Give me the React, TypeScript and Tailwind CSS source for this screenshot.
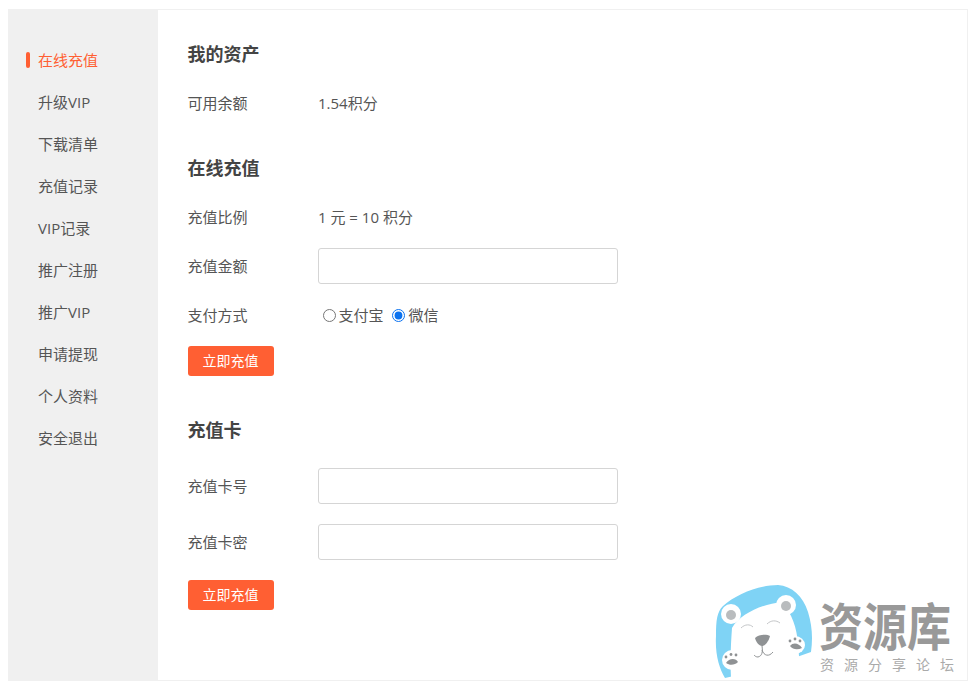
const navItems = ["在线充值", "升级VIP", "下载清单", "充值记录", "VIP记录", "推广注册", "推广VIP", "申请提现", "个人资料", "安全退出"]

const fontStack = "font-['Open_Sans','Noto_Sans_CJK_SC',sans-serif]"

const Row = ({ label, className = "", children }: { label: string; className?: string; children: React.ReactNode }) => (
  <div className={`flex items-center h-9 text-[15px] text-[#555] ${className}`}>
    <span className="w-[130px] shrink-0">{label}</span>
    {children}
  </div>
)

const Input = () => <input className="w-[300px] h-9 border border-[#d5d5d5] rounded-[3px] bg-white outline-none" />

const Heading = ({ className = "", children }: { className?: string; children: React.ReactNode }) => (
  <h2 className={`h-7 leading-7 text-lg font-bold text-[#444] ${className}`}>{children}</h2>
)

const SubmitButton = ({ className = "" }: { className?: string }) => (
  <button className={`block w-[86px] h-[30px] rounded-[3px] bg-[#ff5f33] text-sm text-white ${className}`}>立即充值</button>
)

const Radio = ({ label, checked, className = "" }: { label: string; checked?: boolean; className?: string }) => (
  <label className="flex items-center">
    <input type="radio" name="pay" defaultChecked={checked} className={`w-[13px] h-[13px] ml-[5px] accent-[#0b72ef] ${className}`} />
    {label}
  </label>
)

const Watermark = () => (
  <div className="absolute left-[700px] top-[570px] w-[278px] h-[121px] pointer-events-none">
    <svg width="130" height="121" viewBox="0 0 130 121" className="absolute left-0 top-0">
      <path d="M25 108C19 98 15 84 16 66C16 50 17 42 23 36C36 24 60 15 78 15C92 16 103 26 108 42C112 55 113 68 111 82L60 100Z" fill="#7fd3f5" />
      <path d="M31 108C30 90 31 72 32 58C40 44 62 34 82 32C92 44 97 58 98 74L100 98C88 108 50 112 31 108Z" fill="#fff" />
      <circle cx="31" cy="44" r="10" fill="#fff" />
      <circle cx="31" cy="45" r="5" fill="#b9bcbe" />
      <circle cx="86" cy="35" r="10" fill="#fff" />
      <circle cx="86" cy="36" r="5" fill="#b9bcbe" />
      <path d="M41 58C45 54 50 54 53 57" fill="none" stroke="#c4c6c8" strokeWidth="1" />
      <path d="M67 54C71 50 76 50 80 53" fill="none" stroke="#c4c6c8" strokeWidth="1" />
      <path d="M55 68C59 64 67 64 70 66C69 71 65 76 62 76C59 76 56 72 55 68Z" fill="#8f9294" />
      <path d="M62 76C63 82 62 86 58 87C56 87 55 86 54 85M62 80C64 86 69 87 73 82" fill="none" stroke="#8f9294" strokeWidth="1" />
      <ellipse cx="32" cy="90" rx="10" ry="10" fill="#fff" />
      <ellipse cx="95" cy="75" rx="10" ry="9" fill="#fff" />
      <path d="M26 93C29 88 36 88 38 92C35 95 30 96 26 93Z" fill="#8f9294" />
      <circle cx="26" cy="87" r="1.4" fill="#8f9294" />
      <circle cx="31" cy="84.5" r="1.4" fill="#8f9294" />
      <circle cx="36" cy="85" r="1.4" fill="#8f9294" />
      <path d="M90 76C93 72 99 73 102 78C98 80 93 80 90 76Z" fill="#8f9294" />
      <circle cx="90" cy="71" r="1.4" fill="#8f9294" />
      <circle cx="95" cy="69" r="1.4" fill="#8f9294" />
      <circle cx="100" cy="71" r="1.4" fill="#8f9294" />
    </svg>
    <div className="absolute left-[119px] top-[33px] text-[44px] leading-[40px] font-bold text-[#999] whitespace-nowrap origin-top-left scale-y-[1.15]">资源库</div>
    <div className="absolute left-[120px] top-[88px] text-sm leading-[14px] tracking-[10px] text-[#aaa] whitespace-nowrap">资源分享论坛</div>
  </div>
)

const App = () => {
  return (
    <div className={`relative w-[978px] h-[691px] bg-white overflow-hidden pt-[9px] pl-[8px] ${fontStack}`}>
      <div className="flex w-[960px] h-[672px] border-t border-r border-b border-[#f0f0f0]">
        <aside className="w-[150px] h-full bg-[#f0f0f0] pt-[29px]">
          {navItems.map((item, i) => (
            <div key={item} className={`relative h-[42px] leading-[42px] pl-[30px] text-[15px] ${i === 0 ? "text-[#ff5f33]" : "text-[#555]"}`}>
              {i === 0 && <span className="absolute left-[18px] top-[13px] w-[4px] h-[16px] rounded-sm bg-[#ff5f33]" />}
              {item}
            </div>
          ))}
        </aside>
        <main className="flex-1 pl-[29.5px] pt-[30px]">
          <Heading>我的资产</Heading>
          <Row label="可用余额" className="mt-[17px]"><span className="ml-[0.5px]">1.54积分</span></Row>

          <Heading className="mt-[33px]">在线充值</Heading>
          <Row label="充值比例" className="mt-[17px]"><span className="ml-[0.5px]">1 元 = 10 积分</span></Row>
          <Row label="充值金额" className="mt-[13px]"><Input /></Row>
          <Row label="支付方式" className="mt-[13px]">
            <div className="flex items-center gap-[3px]">
              <Radio label="支付宝" className="mr-[3px]" />
              <Radio label="微信" className="mr-[4px]" checked />
            </div>
          </Row>
          <SubmitButton className="mt-[13px]" />

          <Heading className="mt-[40px]">充值卡</Heading>
          <Row label="充值卡号" className="mt-[24px]"><Input /></Row>
          <Row label="充值卡密" className="mt-[20px]"><Input /></Row>
          <SubmitButton className="mt-[20px]" />
        </main>
      </div>
      <Watermark />
    </div>
  )
}

export default App
